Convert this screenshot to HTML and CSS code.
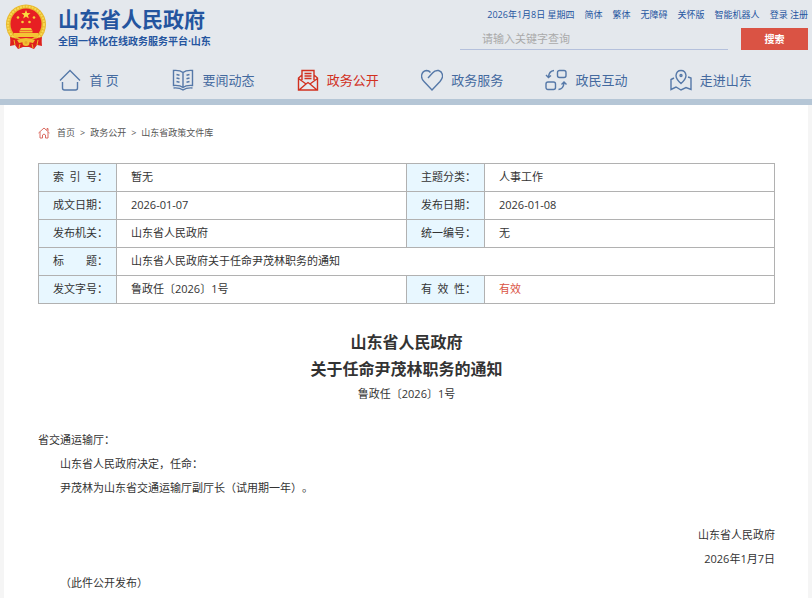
FILE: index.html
```html
<!DOCTYPE html>
<html lang="zh-CN">
<head>
<meta charset="utf-8">
<meta name="viewport" content="width=device-width, initial-scale=1">
<title>山东省人民政府关于任命尹茂林职务的通知</title>
<link rel="stylesheet" href="styles.css">
</head>
<body>
<header class="site-header">
  <div class="masthead">
    <a class="brand" href="#">
      <svg class="emblem" viewBox="0 0 42 46" aria-hidden="true">
        <path d="M6 30 L5 42 L10 41 L13 45 L18 43 H24 L29 45 L32 41 L37 42 L36 30Z" fill="#dd221d"/>
        <circle cx="21" cy="20.500" r="20" fill="#e9b92c"/>
        <circle cx="21" cy="20.500" r="18" fill="none" stroke="#f7d955" stroke-width="2" stroke-dasharray="2 1"/>
        <circle cx="21" cy="20" r="15.500" fill="#e71f23"/>
        <path d="M21 6 l1.200 3 3.300.2-2.600 2 .9 3.200-2.800-1.800-2.800 1.800.9-3.200-2.600-2 3.300-.2z" fill="#fbdc3f"/>
        <g fill="#f8cf3a"><circle cx="13" cy="13.500" r="1.300"/><circle cx="29" cy="13.500" r="1.300"/><circle cx="17.500" cy="18" r="1.300"/><circle cx="24.500" cy="18" r="1.300"/></g>
        <path d="M16 24h10l1 2h-12z M14.500 26.500h13v2h-13z M9 29h24v4H9z" fill="#f4c535"/>
        <path d="M5 33 Q21 38 37 33 L36 39 Q21 43 6 39Z" fill="#df211e"/>
        <path d="M12 36 Q21 32 30 36 L28 39 Q21 37 14 39Z" fill="#f1c233"/>
        <circle cx="21" cy="38.500" r="3.500" fill="#f1c233"/><circle cx="21" cy="38.500" r="1.500" fill="#e9a52a"/>
        <path d="M9 36l1 5M33 36l-1 5M15 40l-1 4M27 40l1 4" stroke="#efb52e" stroke-width="1"/>
      </svg>
      <span class="brand-text">
        <strong class="brand-name">山东省人民政府</strong>
        <span class="brand-sub">全国一体化在线政务服务平台·山东</span>
      </span>
    </a>
    <div class="tools">
      <div class="toplinks">
        <span>2026年1月8日 星期四</span>
        <a href="#">简体</a>
        <a href="#">繁体</a>
        <a href="#">无障碍</a>
        <a href="#">关怀版</a>
        <a href="#">智能机器人</a>
        <span class="account"><a href="#">登录</a> <a href="#">注册</a></span>
      </div>
      <form class="search">
        <input class="search-input" type="text" placeholder="请输入关键字查询" aria-label="请输入关键字查询">
        <button class="search-button" type="button">搜索</button>
      </form>
    </div>
  </div>
  <nav class="mainnav">
    <a href="#"><svg class="icon" viewBox="0 0 22 22"><path d="M1 11.500 11 1.500l10 10M3.500 13v6q0 2 2 2h11q2 0 2-2v-6"/></svg><span>首 页</span></a>
    <a href="#"><svg class="icon" viewBox="0 0 22 22"><path d="M11 3.500Q8 1 1.500 1.500v15Q8 16 11 18.500 14 16 20.500 16.500v-15Q14 1 11 3.500zV18M4.500 5.500l3 .8M4.500 9l3 .8M4.500 12.500l3 .8M17.500 5.500l-3 .8M17.500 9l-3 .8M17.500 12.500l-3 .8M1.500 19q6-.5 9.500 2 3.500-2.500 9.500-2"/></svg><span>要闻动态</span></a>
    <a class="active" href="#"><svg class="icon" viewBox="0 0 22 22"><path d="M5 11V1.500h12V11M7.500 4.500h7M7.500 7h7M7.500 9.500h7M5 6 1.500 9v12h19V9L17 6M1.500 9.500 9 15l2-1.500 2 1.500 7.500-5.500M9 15l-7 6M13 15l7 6"/></svg><span>政务公开</span></a>
    <a href="#"><svg class="icon" viewBox="0 0 22 22"><path d="M7 9 11.500 4Q14 1 17.500 1.500 22 3 21.500 8 21 10 19 12.500l-8 8.500-8-8.500Q.5 10 .5 7 1 2 5.500 1.500 8 1.500 9.500 3.500"/></svg><span>政务服务</span></a>
    <a href="#"><svg class="icon" viewBox="0 0 22 22"><rect x="12.500" y="1.500" width="8.500" height="7" rx="2"/><rect x="1" y="13" width="9.500" height="7.500" rx="2"/><path d="M9 1.500Q4 2 3.500 8M1 6l2.500 2.500L6 6.500M13.500 20.500q5-.5 5.500-6.500M16.500 15.500 19 13l2.500 2.500"/></svg><span>政民互动</span></a>
    <a href="#"><svg class="icon" viewBox="0 0 22 22"><path d="M11 14.500Q6 10 6 6.500 6.500 1.500 11 1.500t5 5Q16 10 11 14.500zM4 9 1 10.500v10l5-2.500 5 3 5-2.500 5 2V9l-3-1"/><circle cx="11" cy="6.500" r="1"/></svg><span>走进山东</span></a>
  </nav>
</header>
<main class="page">
  <nav class="crumbs" aria-label="位置">
    <svg class="crumb-icon" viewBox="0 0 12 12"><path d="M.5 6 6 1l5.500 5M2 5v6h2.500V8Q6 6 7.500 8v3H10V5M9 3V1.500h1V4"/></svg>
    <a href="#">首页</a><span>&gt;</span><a href="#">政务公开</a><span>&gt;</span><a href="#">山东省政策文件库</a>
  </nav>
  <table class="meta">
    <colgroup><col class="col-label"><col><col class="col-label"><col></colgroup>
    <tr><th scope="row"><span>索 引 号</span>：</th><td>暂无</td><th scope="row"><span>主题分类</span>：</th><td>人事工作</td></tr>
    <tr><th scope="row"><span>成文日期</span>：</th><td>2026-01-07</td><th scope="row"><span>发布日期</span>：</th><td>2026-01-08</td></tr>
    <tr><th scope="row"><span>发布机关</span>：</th><td>山东省人民政府</td><th scope="row"><span>统一编号</span>：</th><td>无</td></tr>
    <tr><th scope="row"><span>标 题</span>：</th><td colspan="3">山东省人民政府关于任命尹茂林职务的通知</td></tr>
    <tr><th scope="row"><span>发文字号</span>：</th><td>鲁政任〔2026〕1号</td><th scope="row"><span>有 效 性</span>：</th><td class="valid">有效</td></tr>
  </table>
  <article class="doc">
    <h1>山东省人民政府<br>关于任命尹茂林职务的通知</h1>
    <p class="doc-number">鲁政任〔2026〕1号</p>
    <div class="doc-body">
      <p>省交通运输厅：</p>
      <p class="indent">山东省人民政府决定，任命：</p>
      <p class="indent">尹茂林为山东省交通运输厅副厅长（试用期一年）。</p>
      <div class="signature">
        <p>山东省人民政府</p>
        <p>2026年1月7日</p>
      </div>
      <p class="indent">（此件公开发布）</p>
    </div>
  </article>
</main>
</body>
</html>
```
FILE: styles.css
```css
* { box-sizing: border-box; }
body {
  margin: 0;
  background: #f5f5f5;
  color: #333;
  font-family: "Open Sans", "Noto Sans CJK SC", sans-serif;
  font-size: 11px;
  line-height: 24px;
  text-spacing-trim: space-all;
}
a { color: inherit; text-decoration: none; }
p, h1 { margin: 0; }

.site-header { background: #e4e8ed; border-bottom: 6px solid #b5c6d6; }
.masthead { display: flex; justify-content: space-between; padding: 4px 4px 0 5px; height: 60px; }
.brand { display: flex; gap: 11px; color: #24559f; }
.emblem { width: 42px; height: 46px; }
.brand-text { display: flex; flex-direction: column; white-space: nowrap; }
.brand-name { font-size: 21px; line-height: 30px; font-weight: 700; }
.brand-sub { font-size: 10px; line-height: 14px; font-weight: 700; }

.tools { width: 348px; }
.toplinks {
  display: flex;
  justify-content: flex-end;
  gap: 10px;
  color: #24559f;
  font-size: 9px;
  line-height: 22px;
  white-space: nowrap;
}
.search { display: flex; gap: 13px; margin-top: 2px; }
.search-input {
  flex: 1;
  min-width: 0;
  height: 22px;
  padding: 0 22px;
  border: 0;
  border-bottom: 1px solid #b4c0dc;
  background: transparent;
  font: inherit;
  line-height: 20px;
}
.search-input::placeholder { color: #aaa; opacity: 1; }
.search-button {
  width: 67px;
  height: 22px;
  padding: 0;
  border: 0;
  background: #da5344;
  color: #fff;
  font: inherit;
  font-size: 10px;
  font-weight: 700;
  line-height: 22px;
}

.mainnav {
  display: grid;
  grid-template-columns: repeat(6, 1fr);
  height: 39px;
  padding: 0 39px 0 27px;
  color: #446a9f;
  font-size: 13px;
}
.mainnav a { display: flex; align-items: center; justify-content: center; gap: 8px; white-space: nowrap; }
.mainnav .active { color: #d1301f; }
.icon { width: 22px; height: 22px; fill: none; stroke: #5578a8; stroke-width: 1.4; }
.active .icon { stroke: #d1301f; }

.page { margin: 0 4px; padding: 16px 33px 12px 34px; background: #fff; }
.crumbs { display: flex; align-items: center; gap: 5px; color: #555; font-size: 9px; }
.crumb-icon { width: 12px; height: 12px; margin-right: 2px; fill: none; stroke: #da6b60; }

.meta { width: 100%; margin-top: 18px; border-collapse: collapse; table-layout: fixed; }
.col-label { width: 78px; }
.meta th, .meta td { height: 28px; padding: 0 14px 2px; border: 1px solid #b1b1b1; line-height: 24px; text-align: left; font-weight: 400; }
.meta th { background: #e8f7ff; white-space: nowrap; padding-right: 0; }
.meta th span { display: inline-block; width: 44px; text-align: justify; text-align-last: justify; }
.meta .valid { color: #da5344; }

.doc { margin-top: 25px; }
.doc h1 { font-size: 16px; line-height: 27px; font-weight: 700; text-align: center; }
.doc-number { line-height: 22px; text-align: center; }
.doc-body { margin-top: 23px; }
.indent { text-indent: 2em; }
.signature { margin-top: 23px; text-align: right; }
```
